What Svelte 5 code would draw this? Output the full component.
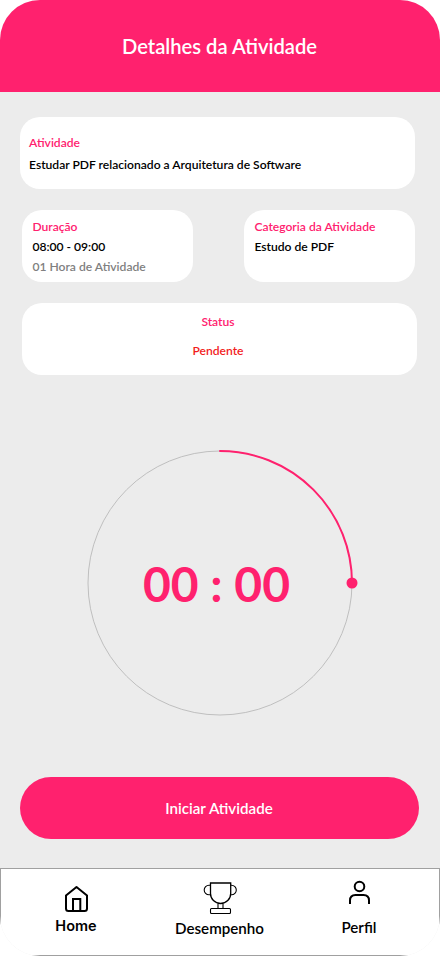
<script>
  const activity = {
    name: 'Estudar PDF relacionado a Arquitetura de Software',
    time: '08:00 - 09:00',
    length: '01 Hora de Atividade',
    category: 'Estudo de PDF',
    status: 'Pendente'
  };
</script>

<div class="screen">
  <header><h1>Detalhes da Atividade</h1></header>

  <main>
    <section class="card activity">
      <span class="label">Atividade</span>
      <span class="value">{activity.name}</span>
    </section>

    <div class="row">
      <section class="card small">
        <span class="label">Duração</span>
        <span class="value">{activity.time}</span>
        <span class="muted">{activity.length}</span>
      </section>
      <section class="card small">
        <span class="label">Categoria da Atividade</span>
        <span class="value">{activity.category}</span>
      </section>
    </div>

    <section class="card status">
      <span class="label">Status</span>
      <span class="pending">{activity.status}</span>
    </section>

    <div class="timer">
      <svg width="276" height="276" viewBox="0 0 276 276" fill="none">
        <circle cx="138" cy="138" r="132" stroke="#bfbfbf" stroke-width="1" />
        <path d="M138 6A132 132 0 0 1 270 138" stroke="#ff216e" stroke-width="2" stroke-linecap="round" />
        <circle cx="270" cy="138" r="5.5" fill="#ff216e" />
      </svg>
      <span class="time">00 : 00</span>
    </div>

    <button>Iniciar Atividade</button>
  </main>

  <nav>
    <a class="home" href="#home">
      <svg width="24" height="28" viewBox="0 0 24 28" fill="none" stroke="#000" stroke-width="2" stroke-linejoin="round" stroke-linecap="round">
        <path d="M2 10.5L12.5 2L23 10.5V23.5Q23 26 20.5 26H4.5Q2 26 2 23.5Z" />
        <path d="M9 26V14H16.3V26" stroke-linejoin="miter" />
      </svg>
      <span>Home</span>
    </a>
    <a class="performance" href="#desempenho">
      <svg width="34" height="34" viewBox="0 0 34 34" fill="none" stroke="#000" stroke-width="1.1">
        <path d="M7.5 2H27.7V12.5C27.7 18 23.2 22.5 17.6 22.5S7.5 18 7.5 12.5Z" stroke-width="1.3" />
        <path d="M7.5 4.2H6A4.8 4.8 0 0 0 6 13.8H7.5M27.7 4.2H28.5A4.8 4.8 0 0 1 28.5 13.8H27.7" />
        <path d="M15 22.5V27.5M20 22.5V27.5" />
        <rect x="7.5" y="27.5" width="20" height="5" rx="1" />
      </svg>
      <span>Desempenho</span>
    </a>
    <a class="profile" href="#perfil">
      <svg width="22" height="26" viewBox="0 0 22 26" fill="none" stroke="#000" stroke-width="2">
        <circle cx="11.5" cy="7.5" r="4.8" />
        <path d="M2 25V21.5Q2 16 7.5 16H15.5Q21 16 21 21.5V25" />
      </svg>
      <span>Perfil</span>
    </a>
  </nav>
</div>

<style>
  :global(body) { background: #fff; }
  * { box-sizing: border-box; }
  .screen {
    width: 440px;
    height: 956px;
    overflow: hidden;
    border-radius: 40px;
    background: #ececec;
    display: flex;
    flex-direction: column;
    font-family: Lato, sans-serif;
    font-weight: 600;
  }
  header {
    height: 92px;
    flex: none;
    background: #ff216e;
    display: flex;
    align-items: center;
    justify-content: center;
  }
  h1 { margin: 0 1px 0 0; color: #fff; font-size: 20.2px; line-height: 24px; font-weight: 600; }
  main { height: 776px; flex: none; padding: 25px 21px 0 20px; display: flex; flex-direction: column; }
  .card {
    height: 72px;
    flex: none;
    border-radius: 20px;
    background: #fff;
    display: flex;
    flex-direction: column;
    font-size: 12.1px;
    line-height: 20px;
  }
  .activity { width: 395px; padding: 16px 9px 0; gap: 2px; }
  .row { display: flex; justify-content: space-between; width: 393px; margin: 21px 0 21px 2px; }
  .small { width: 171px; padding: 7px 10px 0 10.4px; white-space: nowrap; }
  .status { width: 395px; margin-left: 2px; padding: 9px 3px 0 0; align-items: center; gap: 9px; }
  .label { color: #ff216e; }
  .value { color: #000; }
  .muted { color: #808080; }
  .pending { color: #f21d1d; }
  .timer { width: 276px; height: 276px; flex: none; margin: 70px 0 0 62px; display: grid; place-items: center; }
  .timer > * { grid-area: 1 / 1; }
  .time { color: #ff216e; font-size: 48px; line-height: 58px; font-weight: 700; margin: 2px 7px 0 0; white-space: nowrap; }
  button {
    width: 399px;
    height: 62px;
    flex: none;
    margin-top: 56px;
    padding: 0 1px 0 0;
    border: 0;
    border-radius: 31px;
    background: #ff216e;
    color: #fff;
    font: 600 15.15px/20px Lato, sans-serif;
  }
  nav {
    height: 88px;
    flex: none;
    background: #fff;
    border: 1px solid #a0a0a0;
    display: flex;
  }
  a { display: flex; flex-direction: column; align-items: center; text-decoration: none; color: #000; font-size: 15.15px; line-height: 20px; }
  .home { width: 150px; padding-top: 16px; font-family: Inter, sans-serif; font-size: 14.5px; }
  .home span { margin-top: 3px; }
  .performance { width: 137px; padding-top: 12px; }
  .performance span { margin-top: 3px; }
  .profile { width: 142px; padding-top: 10px; }
  .profile span { margin-top: 12px; }
</style>
